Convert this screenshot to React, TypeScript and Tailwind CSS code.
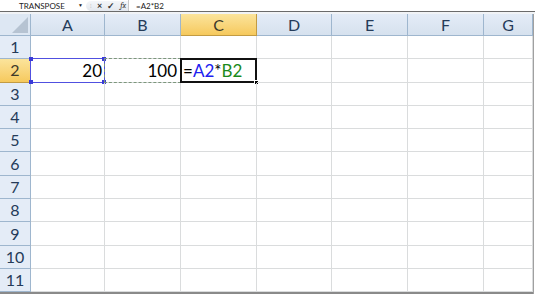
const cols = ["A", "B", "C", "D", "E", "F", "G"];
const widths = ["w-[74px]", "w-[76px]", "w-[76px]", "w-[75px]", "w-[76px]", "w-[76px]", "w-[49px]"];
const rows = [1, 2, 3, 4, 5, 6, 7, 8, 9, 10, 11];

const Handle = ({ pos }: { pos: string }) => (
  <div className={`absolute w-[4px] h-[4px] bg-[#3a3ad8] ${pos}`} />
);

const FormulaBar = () => (
  <div className="flex h-[11px] items-center bg-white text-[8px] leading-none text-[#222] border-b border-[#6b6b6b] box-content">
    <div className="relative flex w-[86px] h-full items-center pl-[19px]">
      <span>TRANSPOSE</span>
      <span className="absolute left-[78px] top-[3px] text-[5px]">▼</span>
    </div>
    <div className="flex h-[10px] w-[42px] items-center gap-[5px] rounded-l-full bg-gradient-to-b from-[#f4f6f9] to-[#e4e8ee] pl-[4px] text-[#333]">
      <span className="text-[6px] text-[#aaa]">⁝</span>
      <span className="font-bold text-[9px]">×</span>
      <span className="font-bold text-[9px]">✓</span>
      <span className="italic text-[8px] font-serif">fx</span>
    </div>
    <div className="h-full w-px bg-[#c8c8c8]" />
    <span className="pl-[7px]">=A2*B2</span>
  </div>
);

const Cell = ({ col, row, w }: { col: string; row: number; w: string }) => {
  const base = `relative h-full ${w} shrink-0 border-r border-b border-[#dadcdd]`;
  if (row === 2 && col === "A") {
    return (
      <div className={base}>
        <div className="absolute -left-px -top-px right-[-1px] bottom-[-1px] border border-[#5050e0]" />
        <Handle pos="-left-[2px] -top-[2px]" />
        <Handle pos="-right-[2px] -top-[2px]" />
        <Handle pos="-left-[2px] -bottom-[2px]" />
        <Handle pos="-right-[2px] -bottom-[2px]" />
        <div className="flex h-full items-center justify-end pr-[2px]">20</div>
      </div>
    );
  }
  if (row === 2 && col === "B") {
    return (
      <div className={base}>
        <div className="absolute -left-px -top-px right-[-1px] bottom-[-1px] border border-dashed border-[#7c967c]" />
        <div className="flex h-full items-center justify-end pr-[3px]">100</div>
      </div>
    );
  }
  if (row === 2 && col === "C") {
    return (
      <div className={base}>
        <div className="absolute -left-px -top-px right-[-1px] bottom-[-1px] border-2 border-[#111]" />
        <div className="absolute right-[-3px] bottom-[-3px] w-[5px] h-[5px] bg-black border border-white" />
        <div className="flex h-full items-center pl-[2px]">
          <span>=</span>
          <span className="text-[#2020f0]">A2</span>
          <span>*</span>
          <span className="text-[#1b8a1b]">B2</span>
        </div>
      </div>
    );
  }
  return <div className={base} />;
};

export default function App() {
  return (
    <div className="w-[535px] h-[294px] overflow-hidden bg-white font-['Lato','Open_Sans',sans-serif] text-[17px] text-black">
      <FormulaBar />
      <div className="h-[2px] bg-[#f1f3f6]" />
      <div className="flex">
        <div className="flex flex-col border-r border-[#a0a0a0]">
          <div className="flex h-[22px]">
            <div className="relative w-[31px] shrink-0 border-r border-b border-[#9eb6ce] bg-[#dde7f3]">
              <svg className="absolute right-[2px] bottom-[2px]" width="16" height="16" viewBox="0 0 16 16">
                <polygon points="16,0 16,16 0,16" fill="#b6c3d2" />
              </svg>
            </div>
            {cols.map((c, i) => (
              <div
                key={c}
                className={`${widths[i]} shrink-0 flex items-center justify-center border-r border-b text-[16px] ${
                  c === "C"
                    ? "bg-gradient-to-b from-[#fbe49b] to-[#f6c95c] border-[#c29b43] text-[#3e3a2a]"
                    : "bg-gradient-to-b from-[#e4ecf7] to-[#d6e1ee] border-[#9eb6ce] text-[#253b59]"
                }`}
              >
                {c}
              </div>
            ))}
          </div>
          {rows.map((r) => (
            <div key={r} className="flex h-[23.3px]">
              <div
                className={`w-[31px] shrink-0 flex items-center justify-center border-r border-b text-[16px] ${
                  r === 2
                    ? "bg-gradient-to-b from-[#fbe49b] to-[#f6c95c] border-[#c29b43] text-[#3e3a2a]"
                    : "bg-[#e4ecf7] border-[#9eb6ce] text-[#253b59]"
                }`}
              >
                {r}
              </div>
              {cols.map((c, i) => (
                <Cell key={c} col={c} row={r} w={widths[i]} />
              ))}
            </div>
          ))}
          <div className="h-[2px] bg-[#8a8a8a]" />
        </div>
        <div className="flex-1 bg-white" />
      </div>
    </div>
  );
}
